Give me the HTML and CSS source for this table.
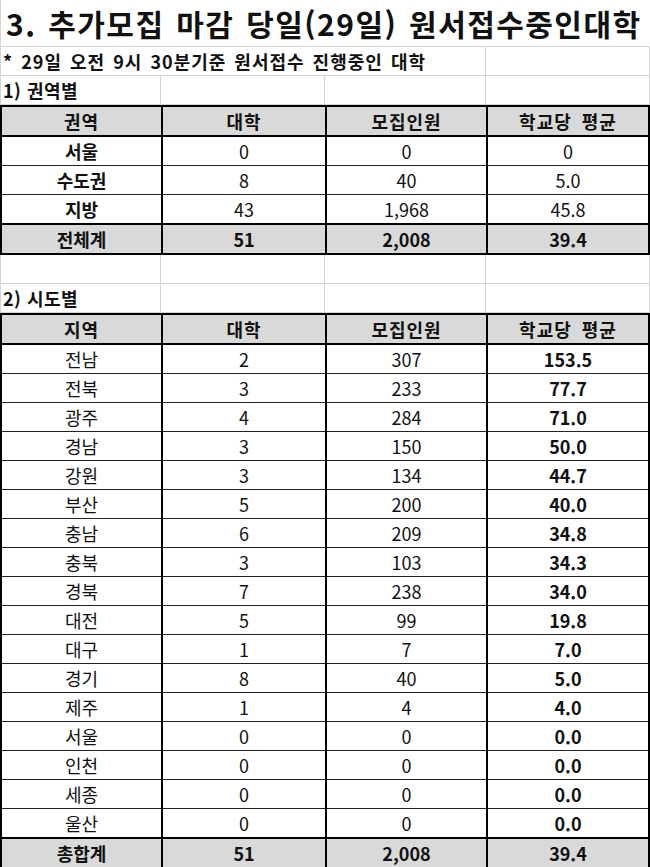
FILE: index.html
```html
<!DOCTYPE html>
<html lang="ko">
<head>
<meta charset="utf-8">
<link rel="stylesheet" href="styles.css">
</head>
<body>
<div class="sheet">
  <div class="title">3. 추가모집 마감 당일(29일) 원서접수중인대학</div>
  <div class="row">
    <div class="cell note span3">* 29일 오전 9시 30분기준 원서접수 진행중인 대학</div>
    <div class="cell"></div>
  </div>
  <div class="row">
    <div class="cell label">1) 권역별</div>
    <div class="cell"></div>
    <div class="cell"></div>
    <div class="cell"></div>
  </div>
  <table class="data">
    <colgroup><col class="c1"><col class="c2"><col class="c3"><col class="c4"></colgroup>
    <tr class="head"><td>권역</td><td>대학</td><td>모집인원</td><td>학교당 평균</td></tr>
    <tr><td class="b">서울</td><td>0</td><td>0</td><td>0</td></tr>
    <tr><td class="b">수도권</td><td>8</td><td>40</td><td>5.0</td></tr>
    <tr><td class="b">지방</td><td>43</td><td>1,968</td><td>45.8</td></tr>
    <tr class="total"><td>전체계</td><td>51</td><td>2,008</td><td>39.4</td></tr>
  </table>
  <div class="row">
    <div class="cell"></div>
    <div class="cell"></div>
    <div class="cell"></div>
    <div class="cell"></div>
  </div>
  <div class="row">
    <div class="cell label">2) 시도별</div>
    <div class="cell"></div>
    <div class="cell"></div>
    <div class="cell"></div>
  </div>
  <table class="data">
    <colgroup><col class="c1"><col class="c2"><col class="c3"><col class="c4"></colgroup>
    <tr class="head"><td>지역</td><td>대학</td><td>모집인원</td><td>학교당 평균</td></tr>
    <tr><td>전남</td><td>2</td><td>307</td><td class="b">153.5</td></tr>
    <tr><td>전북</td><td>3</td><td>233</td><td class="b">77.7</td></tr>
    <tr><td>광주</td><td>4</td><td>284</td><td class="b">71.0</td></tr>
    <tr><td>경남</td><td>3</td><td>150</td><td class="b">50.0</td></tr>
    <tr><td>강원</td><td>3</td><td>134</td><td class="b">44.7</td></tr>
    <tr><td>부산</td><td>5</td><td>200</td><td class="b">40.0</td></tr>
    <tr><td>충남</td><td>6</td><td>209</td><td class="b">34.8</td></tr>
    <tr><td>충북</td><td>3</td><td>103</td><td class="b">34.3</td></tr>
    <tr><td>경북</td><td>7</td><td>238</td><td class="b">34.0</td></tr>
    <tr><td>대전</td><td>5</td><td>99</td><td class="b">19.8</td></tr>
    <tr><td>대구</td><td>1</td><td>7</td><td class="b">7.0</td></tr>
    <tr><td>경기</td><td>8</td><td>40</td><td class="b">5.0</td></tr>
    <tr><td>제주</td><td>1</td><td>4</td><td class="b">4.0</td></tr>
    <tr><td>서울</td><td>0</td><td>0</td><td class="b">0.0</td></tr>
    <tr><td>인천</td><td>0</td><td>0</td><td class="b">0.0</td></tr>
    <tr><td>세종</td><td>0</td><td>0</td><td class="b">0.0</td></tr>
    <tr><td>울산</td><td>0</td><td>0</td><td class="b">0.0</td></tr>
    <tr class="total"><td>총합계</td><td>51</td><td>2,008</td><td>39.4</td></tr>
  </table>
</div>
</body>
</html>
```
FILE: styles.css
```css
html, body {
  margin: 0;
  padding: 0;
  background: #fff;
}
body {
  width: 650px;
  height: 867px;
  overflow: hidden;
  font-family: "Noto Sans CJK KR", "Noto Sans", sans-serif;
  color: #111;
}
.sheet {
  width: 650px;
  border-left: 1px solid #d4d4d4;
  box-sizing: border-box;
}
.title {
  height: 47px;
  box-sizing: border-box;
  border-bottom: 1px solid #d4d4d4;
  font-size: 30px;
  font-weight: 700;
  line-height: 46px;
  padding-left: 5px;
  letter-spacing: 1.45px;
  word-spacing: 2px;
  white-space: nowrap;
}
.row {
  display: grid;
  grid-template-columns: 160px 164px 161px 1fr;
  height: 29.1px;
  box-sizing: border-box;
  border-bottom: 1px solid #d4d4d4;
}
.cell {
  border-right: 1px solid #d4d4d4;
  font-size: 18px;
  font-weight: 700;
  line-height: 28px;
  padding-left: 2px;
  letter-spacing: 0.5px;
  white-space: nowrap;
}
.cell.note {
  letter-spacing: 1px;
  word-spacing: 2px;
}
.cell.span3 {
  grid-column: span 3;
}
.data {
  width: 650px;
  margin-left: -1px;
  border-collapse: collapse;
  table-layout: fixed;
  border: 2px solid #000;
}
.data col.c1 { width: 161px; }
.data col.c2 { width: 164px; }
.data col.c3 { width: 161px; }
.data td {
  height: 28px;
  padding: 0;
  text-align: center;
  font-size: 18px;
  line-height: 26px;
  border-top: 1px solid #222;
  border-left: 2px solid #000;
  border-right: 2px solid #000;
  white-space: nowrap;
}
.data tr.head td {
  letter-spacing: 1px;
  word-spacing: 4px;
}
.data tr.head td,
.data tr.total td {
  background: #d9d9d9;
  font-weight: 700;
}
.data tr.head td {
  border-bottom: 2px solid #000;
}
.data tr.total td {
  border-top: 2px solid #000;
}
.data td.b {
  font-weight: 700;
}
```
